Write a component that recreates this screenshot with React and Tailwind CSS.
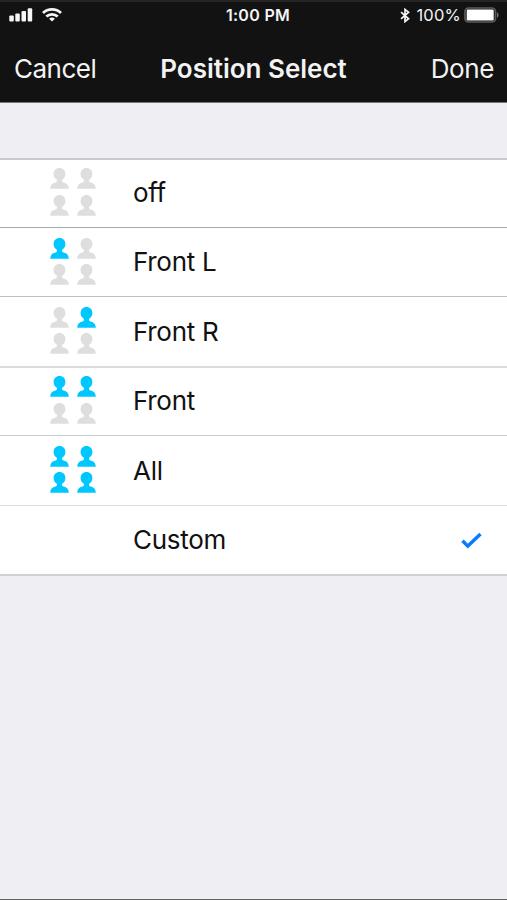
import { useState } from "react";

const positions = [
  { label: "off", seats: [0, 0, 0, 0], row: "h-[69px] border-t-2 border-[#cacacc]", icons: "mt-2", text: "mt-[13px]" },
  { label: "Front L", seats: [1, 0, 0, 0], row: "h-[69px] border-t border-[#a9a9ab]", icons: "mt-[9.500px]", text: "mt-[14px]" },
  { label: "Front R", seats: [0, 1, 0, 0], row: "h-[70px] border-t border-[#bdbdbf]", icons: "mt-[9.500px]", text: "mt-[15px]" },
  { label: "Front", seats: [1, 1, 0, 0], row: "h-[69px] border-t-2 border-[#dcdcde]", icons: "mt-2", text: "mt-[13px]" },
  { label: "All", seats: [1, 1, 1, 1], row: "h-[70px] border-t border-[#cbcbcd]", icons: "mt-[9.500px]", text: "mt-[15px]" },
  { label: "Custom", seats: null, row: "h-[69px] border-t border-[#dededf]", icons: "mt-2", text: "mt-[14px]" },
];

function Person({ active }) {
  return (
    <svg
      viewBox="0 0 19 21"
      className={`h-[21px] w-[19px] ${active ? "text-[#00c8ff]" : "text-[#dedede]"}`}
      fill="currentColor"
    >
      <path d="M9.500 0C5.900 0 3.600 2.500 3.600 5.900c0 2.700 1.300 4.600 3.300 5.900v1.600c-.6.700-1.800 1.100-3.200 1.700C1.400 16.100.4 17.800.2 20.700h18.600c-.2-2.900-1.200-4.600-3.500-5.600-1.400-.6-2.600-1-3.200-1.700v-1.600c2-1.300 3.300-3.200 3.300-5.900C15.400 2.500 13.100 0 9.500 0z" />
    </svg>
  );
}

function StatusBar() {
  return (
    <div className="grid h-8 grid-cols-[1fr_auto_1fr] items-center border-t-2 border-[#252525] pr-[8px] pb-1 pl-[9px] text-[#f5f5f5]">
      <div className="flex items-center gap-[9px]">
        <svg viewBox="0 0 24 14" className="h-[14px] w-6" fill="currentColor">
          <rect x="0.300" y="7.500" width="4.500" height="6" rx="1" />
          <rect x="6.300" y="5.500" width="4.500" height="8" rx="1" />
          <rect x="12.500" y="3" width="4.500" height="10.500" rx="1" />
          <rect x="18.700" y="0.300" width="4.500" height="13.200" rx="1" />
        </svg>
        <svg viewBox="0 0 20 14" className="h-[14px] w-5" fill="none" stroke="currentColor" strokeWidth="2.800">
          <path d="M1 5C6 0.200 14 0.200 19 5" />
          <path d="M4.300 8.600c3.200-3.100 8.200-3.100 11.400 0" />
          <path d="M10 13.600l-2.900-2.900c1.700-1.500 4.100-1.500 5.800 0z" fill="currentColor" stroke="none" />
        </svg>
      </div>
      <span className="pl-[8px] text-center text-[16px] font-semibold tracking-[0.3px] whitespace-nowrap">1:00 PM</span>
      <div className="flex items-center justify-end">
        <svg viewBox="0 0 10 16" className="mr-[6px] h-[15px] w-[10px]" fill="none" stroke="currentColor" strokeWidth="1.800">
          <path d="M0.800 4.500l8 7L5 14.500v-13l3.800 3-8 7" />
        </svg>
        <span className="mr-[3px] text-[16.500px] tracking-[0.2px]">100%</span>
        <svg viewBox="0 0 35 16" className="h-4 w-[35px]">
          <rect x="1" y="1" width="30.500" height="14" rx="3.500" fill="none" stroke="#5c5c5c" strokeWidth="1.700" />
          <rect x="2.700" y="2.500" width="27" height="11" rx="1.200" fill="#fff" />
          <path d="M33 5.500c2 .6 2 4.400 0 5z" fill="#777" />
        </svg>
      </div>
    </div>
  );
}

export default function App() {
  const [selected, setSelected] = useState("Custom");

  return (
    <div className="flex h-[900px] w-full flex-col overflow-hidden border-b border-[#626264] bg-[#eeeef3] font-['Inter',sans-serif]">
      <header className="h-[103px] shrink-0 border-b border-[#777] bg-[#121212]">
        <StatusBar />
        <nav className="grid h-[70px] grid-cols-[1fr_auto_1fr] items-center px-[13px] pt-[3px] text-[26px] text-[#f3f3f3]">
          <button className="justify-self-start pl-px tracking-[-0.5px]">Cancel</button>
          <h1 className="pb-px text-[26px] font-semibold">Position Select</h1>
          <button className="justify-self-end tracking-[-0.4px]">Done</button>
        </nav>
      </header>

      <ul className="mt-[55px] border-b-2 border-[#d0d0d2] bg-white">
        {positions.map(({ label, seats, row, icons, text }) => (
          <li key={label} className={`flex pr-[25px] pl-[50px] ${row}`} onClick={() => setSelected(label)}>
            <div className={`mr-9 grid w-[47px] grid-cols-[19px_19px] content-start gap-x-2 gap-y-[5.500px] ${icons}`}>
              {seats?.map((active, i) => (
                <Person key={i} active={active} />
              ))}
            </div>
            <span className={`h-10 text-[26px] leading-10 tracking-[-0.3px] text-[#111] ${text}`}>{label}</span>
            {selected === label && (
              <svg viewBox="0 0 21 17" className="mt-[26px] ml-auto h-[17px] w-[21px]" fill="none" stroke="#087bff" strokeWidth="3.400">
                <path d="M1.500 8.800l5.300 5.300L19.500 2" />
              </svg>
            )}
          </li>
        ))}
      </ul>
    </div>
  );
}
